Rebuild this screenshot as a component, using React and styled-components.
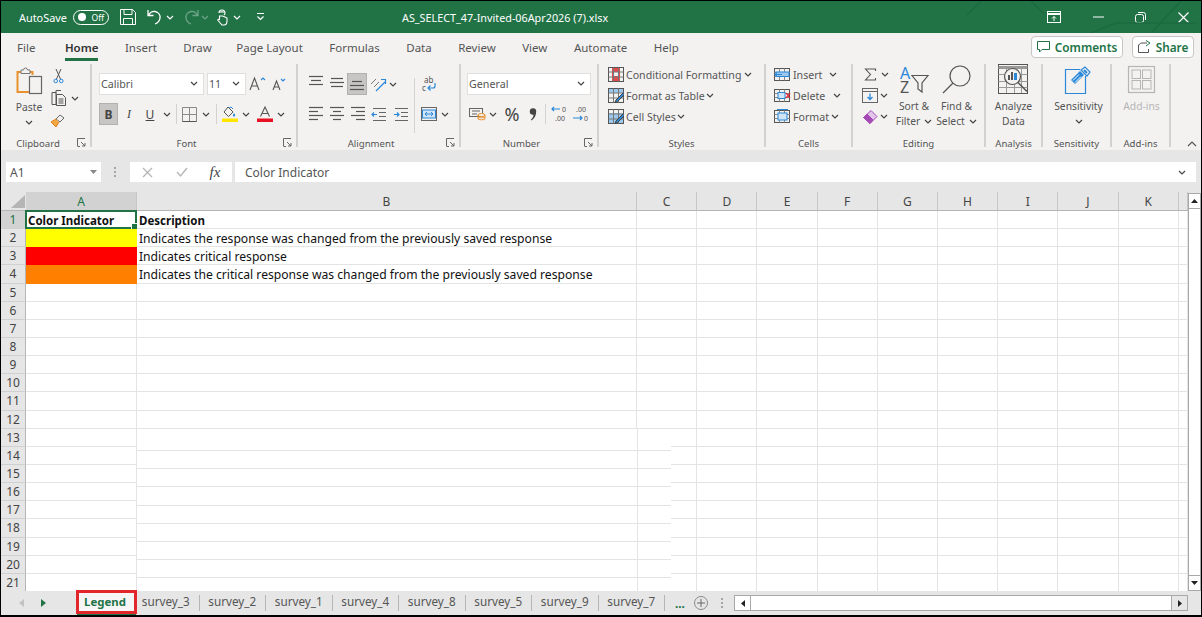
import React from 'react'
import styled, { createGlobalStyle } from 'styled-components'

const GREEN = '#217346'
const INK = '#444'
const BLUE = '#2b88d8'

const Global = createGlobalStyle`
	html, body { margin: 0; padding: 0; background: #fff; }
	* { box-sizing: border-box; }
	body { font-family: "Noto Sans", "Open Sans", sans-serif; color: #444; overflow: hidden; }
`

const Frame = styled.div`
	width: 1202px;
	height: 617px;
	border: solid #000;
	border-width: 1px 1px 2px 1px;
	display: flex;
	flex-direction: column;
	overflow: hidden;
	background: #f3f2f1;
`

const TitleBar = styled.div`
	height: 32px;
	flex: none;
	background: ${GREEN};
	color: #fff;
	display: flex;
	align-items: center;
	font-size: 10.9px;
	position: relative;
`
const AutoSave = styled.span`
	margin-left: 18px;
	width: 54px;
`
const Toggle = styled.span`
	width: 36px;
	height: 15px;
	border: 1px solid #fff;
	border-radius: 8px;
	display: flex;
	align-items: center;
	padding: 0 4px;
	gap: 6px;
	font-size: 8.5px;
	&::before {
		content: '';
		width: 8px;
		height: 8px;
		border-radius: 50%;
		background: #fff;
	}
`
const QuickTool = styled.span`
	display: flex;
	align-items: center;
	justify-content: center;
	flex: none;
	width: ${p => p.$w}px;
	margin-left: ${p => p.$ml || 0}px;
	margin-right: ${p => p.$mr || 0}px;
	opacity: ${p => (p.$dim ? 0.35 : 1)};
`
const FileName = styled.span`
	margin-left: 137px;
	font-size: 10.8px;
	white-space: nowrap;
`
const WindowControls = styled.div`
	margin-left: auto;
	display: flex;
	align-items: center;
`
const Art = styled.svg`
	position: absolute;
	right: 0;
	top: 0;
	pointer-events: none;
`

const TabRow = styled.div`
	height: 29px;
	flex: none;
	display: flex;
	align-items: center;
	padding-left: 16px;
	gap: 26.5px;
	font-size: 11.5px;
	color: #555;
`
const RibbonTab = styled.span`
	position: relative;
	white-space: nowrap;
	margin-right: ${p => (p.$tight ? -2 : 0)}px;
	${p =>
		p.$active &&
		`
		color: #333;
		font-weight: 600;
		margin-left: 3px;
		&::after {
			content: '';
			position: absolute;
			left: 0;
			right: 0;
			bottom: -6px;
			height: 3px;
			background: ${GREEN};
		}
	`}
`
const ShareActions = styled.div`
	margin-left: auto;
	margin-right: 7px;
	margin-top: -2px;
	display: flex;
	gap: 9px;
`
const ActionButton = styled.button`
	height: 22px;
	width: ${p => p.$w}px;
	background: #fff;
	border: 1px solid #c8c6c4;
	border-radius: 4px;
	color: ${GREEN};
	font: 600 11.8px "Noto Sans", sans-serif;
	display: flex;
	align-items: center;
	justify-content: center;
	gap: 5px;
	padding: 0;
`

const Ribbon = styled.div`
	height: 88px;
	flex: none;
	display: flex;
	background: #f3f2f1;
`
const Group = styled.div`
	width: ${p => p.$w}px;
	flex: none;
	display: flex;
	flex-direction: column;
	position: relative;
`
const GroupBody = styled.div`
	height: 75px;
	flex: none;
	display: flex;
	padding-top: ${p => p.$top || 2}px;
`
const GroupLabel = styled.div`
	height: 14px;
	line-height: 14px;
	font-size: 9.6px;
	text-align: center;
	color: #555;
	padding-right: ${p => p.$inset || 0}px;
`
const Launcher = styled.svg`
	position: absolute;
	right: 4px;
	bottom: 3px;
`
const Sep = styled.div`
	width: 2px;
	flex: none;
	margin: 2px 0 3px;
	background: #d4d2d0;
`
const InlineSep = styled.span`
	width: 1px;
	height: ${p => p.$h || 20}px;
	flex: none;
	margin-left: ${p => p.$ml || 0}px;
	background: #d4d2d0;
	align-self: center;
`
const ToolRow = styled.div`
	height: ${p => p.$h || 22}px;
	display: flex;
	align-items: center;
	margin-bottom: ${p => p.$after || 0}px;
`
const Stack = styled.div`
	width: ${p => p.$w}px;
	flex: none;
	margin-left: ${p => p.$ml || 0}px;
`
const Tool = styled.span`
	width: ${p => p.$w}px;
	height: 22px;
	flex: none;
	margin-left: ${p => p.$ml || 0}px;
	display: flex;
	align-items: center;
	justify-content: center;
	background: ${p => (p.$on ? '#c8c6c4' : 'transparent')};
	border: ${p => (p.$on ? '1px solid #b3b1af' : 'none')};
	font: ${p => p.$font || 'inherit'};
	color: #444;
`
const Combo = styled.div`
	width: ${p => p.$w}px;
	height: 22px;
	flex: none;
	margin-left: ${p => p.$ml || 0}px;
	background: #fff;
	border: 1px solid #e1dfdd;
	display: flex;
	align-items: center;
	justify-content: space-between;
	padding: 0 5px 1px 1px;
	font-size: 10.7px;
	color: #555;
`
const ListRow = styled.div`
	height: 21px;
	display: flex;
	align-items: center;
	white-space: nowrap;
	font-size: 10.6px;
	color: #555;
	svg { flex: none; }
`
const ListText = styled.span`
	margin-left: 2px;
	margin-right: ${p => p.$gap || 5}px;
`
const BigTool = styled.div`
	width: ${p => p.$w}px;
	flex: none;
	margin-left: ${p => p.$ml || 0}px;
	display: flex;
	flex-direction: column;
	align-items: center;
	font-size: 10.3px;
	line-height: 15px;
	color: ${p => (p.$muted ? '#b5b5b5' : '#555')};
	text-align: center;
	white-space: nowrap;
`
const BigIcon = styled.div`
	height: 31px;
	margin-bottom: 4px;
	display: flex;
	align-items: center;
	justify-content: center;
`
const BigLine = styled.div`
	height: 15px;
	display: flex;
	align-items: center;
	justify-content: center;
	gap: 4px;
`
const RibbonEnd = styled.div`
	flex: 1;
	display: flex;
	align-items: flex-end;
	justify-content: flex-end;
	padding: 0 4px 3px 0;
`

const RibbonGap = styled.div`
	height: 5px;
	flex: none;
	background: #e6e6e6;
`
const FormulaBar = styled.div`
	height: 37px;
	flex: none;
	background: #e6e6e6;
	display: flex;
	padding: 7px 5px 0 5px;
	align-items: flex-start;
`
const FieldBox = styled.div`
	height: 20px;
	background: #fff;
	display: flex;
	align-items: center;
	font-size: 12px;
	color: #555;
	flex: ${p => (p.$grow ? 1 : 'none')};
	width: ${p => (p.$w ? p.$w + 'px' : 'auto')};
	margin-left: ${p => p.$ml || 0}px;
	padding: 0 ${p => p.$px || 0}px;
	justify-content: ${p => p.$justify || 'flex-start'};
`
const Dots = styled.span`
	width: 2px;
	height: 10px;
	margin-left: ${p => p.$ml}px;
	align-self: ${p => (p.$bar ? 'center' : 'auto')};
	margin-top: ${p => (p.$bar ? 0 : 5)}px;
	flex: none;
	background: repeating-linear-gradient(to bottom, #a5a5a5 0 2px, transparent 2px 4px);
`

const SheetArea = styled.div`
	height: 399px;
	flex: none;
	display: flex;
	background: #fff;
	overflow: hidden;
`
const Grid = styled.div`
	position: relative;
	width: 1187px;
	flex: none;
	display: grid;
	grid-template-columns: 25px 111px 500px repeat(9, 60.2px) 9px;
	grid-template-rows: 19px repeat(21, 18.15px);
	font-size: 12.15px;
	color: #111;
`
const Corner = styled.div`
	background: #e6e6e6;
	border-bottom: 1px solid #b5b5b5;
	display: flex;
	align-items: flex-end;
	justify-content: flex-end;
	padding: 0 1px 2px 0;
`
const ColHead = styled.div`
	background: ${p => (p.$on ? '#d2d2d2' : '#e6e6e6')};
	border-bottom: 1px solid ${p => (p.$on ? GREEN : '#b5b5b5')};
	border-right: 1px solid #c6c6c6;
	color: ${p => (p.$on ? GREEN : '#444')};
	display: flex;
	align-items: center;
	justify-content: center;
	font-size: 12px;
`
const RowHead = styled.div`
	background: ${p => (p.$on ? '#d2d2d2' : '#e6e6e6')};
	border-bottom: 1px solid #d0d0d0;
	border-right: 1px solid ${p => (p.$on ? GREEN : '#b5b5b5')};
	color: ${p => (p.$on ? GREEN : '#444')};
	display: flex;
	align-items: center;
	justify-content: center;
	font-size: 12px;
`
const Cell = styled.div`
	background: ${p => p.$fill || '#fff'};
	border-right: 1px solid ${p => (p.$fill ? p.$fill : '#e4e4e4')};
	border-bottom: 1px solid ${p => (p.$fill ? p.$fill : '#e4e4e4')};
	padding-left: 2px;
	line-height: 19px;
	white-space: nowrap;
	font-size: ${p => (p.$bold ? '11.5px' : 'inherit')};
	font-weight: ${p => (p.$bold ? 700 : 400)};
	position: relative;
`
const Selection = styled.div`
	position: absolute;
	left: -1px;
	top: -1px;
	right: -1px;
	bottom: -1px;
	border: 2px solid ${GREEN};
	pointer-events: none;
	&::after {
		content: '';
		position: absolute;
		right: -3px;
		bottom: -3px;
		width: 5px;
		height: 5px;
		background: ${GREEN};
		border: 1px solid #fff;
	}
`
const ShiftedPatch = styled.div`
	position: absolute;
	left: 136px;
	top: 237px;
	width: 534px;
	height: 162px;
	background-color: #fff;
	background-image:
		linear-gradient(#e4e4e4, #e4e4e4),
		repeating-linear-gradient(to bottom, transparent 0, transparent 17.15px, #e4e4e4 17.15px, #e4e4e4 18.15px);
	background-size: 1px 100%, 100% 100%;
	background-position: 500px 0, 0 3.5px;
	background-repeat: no-repeat, no-repeat;
`
const VScroll = styled.div`
	flex: 1;
	display: flex;
	flex-direction: column;
	background: #e6e6e6;
	padding-top: 1px;
`
const ScrollButton = styled.div`
	height: 16px;
	flex: none;
	background: #fff;
	border: 1px solid #a8a8a8;
	display: flex;
	align-items: center;
	justify-content: center;
`
const VTrack = styled.div`
	flex: 1;
	background: #fff;
	border: solid #a8a8a8;
	border-width: 0 1px;
`

const SheetBar = styled.div`
	height: 24px;
	flex: none;
	background: #e6e6e6;
	display: flex;
	align-items: center;
	font-size: 11.7px;
	color: #555;
`
const SheetNav = styled.div`
	width: 75px;
	flex: none;
	display: flex;
	padding-left: 18px;
	gap: 17px;
`
const ActiveSheet = styled.div`
	width: 61px;
	height: 24px;
	flex: none;
	margin-bottom: 3px;
	padding-right: 3px;
	border: 3px solid #e2272c;
	background: #f6f6f6;
	color: ${GREEN};
	font-size: 11.4px;
	font-weight: 700;
	display: flex;
	align-items: center;
	justify-content: center;
	position: relative;
	z-index: 1;
	&::after {
		content: '';
		position: absolute;
		left: -2px;
		right: -2px;
		bottom: -4px;
		height: 1px;
		background: ${GREEN};
	}
`
const SheetTabs = styled.div`
	display: flex;
	margin-left: -4px;
`
const SheetTab = styled.div`
	width: 66.5px;
	height: 16px;
	line-height: 13px;
	text-align: center;
	border-right: 1px solid #b5b5b5;
	white-space: nowrap;
`
const MoreTabs = styled.span`
	margin-left: 10px;
	width: 11px;
	color: ${GREEN};
	font-weight: 700;
	line-height: 12px;
`
const AddSheet = styled.span`
	width: 14px;
	height: 14px;
	margin-left: 8px;
	border: 1px solid #8a8a8a;
	border-radius: 50%;
	display: flex;
	align-items: center;
	justify-content: center;
	flex: none;
`
const HScroll = styled.div`
	margin-left: 11px;
	width: 454px;
	height: 16px;
	flex: none;
	display: flex;
	align-items: stretch;
	border: 1px solid #a8a8a8;
	background: #e6e6e6;
`
const HButton = styled.div`
	width: ${p => p.$w}px;
	flex: none;
	background: ${p => (p.$plain ? 'transparent' : '#fff')};
	display: flex;
	align-items: center;
	justify-content: center;
`
const HThumb = styled.div`
	flex: 1;
	background: #fff;
	border: solid #a8a8a8;
	border-width: 0 1px;
`

const Chevron = ({ color = INK }) => (
	<svg width="8" height="5" viewBox="0 0 8 5" fill="none" stroke={color} strokeWidth="1.2">
		<path d="M1 1l3 3 3-3" />
	</svg>
)
const Chev = ({ w = 14, ml }) => (
	<Tool $w={w} $ml={ml}>
		<Chevron />
	</Tool>
)
const Ico = ({ w, h, children, ...rest }) => (
	<svg width={w} height={h} viewBox={`0 0 ${w} ${h}`} fill="none" stroke={INK} strokeWidth="1" overflow="visible" {...rest}>
		{children}
	</svg>
)
const LaunchIcon = () => (
	<Launcher width="9" height="9" viewBox="0 0 9 9" fill="none" stroke="#666">
		<path d="M.5 8V.5H8M4 4l4 4M8 5v3H5" />
		<path d="M.5 8.5H3" />
	</Launcher>
)
const LinesIcon = ({ widths, top = 3, gap = 4 }) => (
	<Ico w={14} h={22} stroke="#555" strokeWidth="1.2">
		{widths.map((x, i) => (
			<path key={i} d={`M${x[0]} ${i * gap + top + 0.5}H${x[1]}`} />
		))}
	</Ico>
)

const PasteIcon = () => (
	<Ico w={27} h={30}>
		<path d="M5 6H1.500v20H15" stroke="#e8912d" strokeWidth="2" />
		<path d="M13 6h3.500v3" stroke="#e8912d" strokeWidth="2" />
		<path d="M5 7V4h2.500a2 2 0 0 1 4 0H14v3.500H5z" fill="#f3f2f1" stroke="#777" />
		<rect x="13.500" y="10.500" width="12" height="17" fill="#f3f2f1" stroke="#666" strokeWidth="1.2" />
	</Ico>
)
const CutIcon = () => (
	<Ico w={11} h={16} stroke="#555">
		<path d="M3 1l4.500 10M8 1L3.500 11" />
		<circle cx="2.700" cy="13" r="1.800" stroke={BLUE} />
		<circle cx="8.300" cy="13" r="1.800" stroke={BLUE} />
	</Ico>
)
const CopyIcon = () => (
	<Ico w={16} h={16} stroke="#555">
		<path d="M5 3.500V.5h5M1 2.500h4v12H1z" />
		<path d="M5.500 4.500h6l3 3v8h-9z" fill="#f3f2f1" />
		<path d="M7.500 9h5M7.500 11h5M7.500 13h5" />
	</Ico>
)
const PainterIcon = () => (
	<Ico w={16} h={15}>
		<path d="M10 2l4 3-4 4-4-3z" stroke="#666" />
		<path d="M6 6L1 9l5 5 3-5" fill="#f5a742" stroke="#dd7d1c" />
	</Ico>
)
const GrowIcon = ({ up }) => (
	<Ico w={up ? 17 : 14} h={16} stroke="#555">
		<path d={up ? 'M1 14L5.500 2 10 14M2.600 10h6' : 'M1 14L4.500 5 8 14M2.200 11h4.600'} strokeWidth="1.100" />
		<path d={up ? 'M12 4l2-2 2 2' : 'M9 3l2 2 2-2'} stroke={BLUE} strokeWidth="1.200" />
	</Ico>
)
const BorderIcon = () => (
	<Ico w={15} h={15} stroke="#8a8a8a">
		<path d="M.5.5h14v14H.5zM7.500.5v14M.5 7.500h14" />
		<path d="M.5 14.500h14" stroke="#555" />
	</Ico>
)
const FillIcon = () => (
	<Ico w={16} h={16}>
		<path d="M6 1l5 5-4.500 4.500L2 6z" stroke="#555" />
		<path d="M12 7c1.500 2 1.500 3.500 0 3.500S10.500 9 12 7z" fill={BLUE} stroke="none" />
		<path d="M7 2l2-1 2 2" stroke={BLUE} />
		<rect x="0" y="12.500" width="16" height="3.500" fill="#ffe600" stroke="none" />
	</Ico>
)
const FontColorIcon = () => (
	<Ico w={16} h={16} stroke="#555">
		<path d="M3.500 10.500L8 1l4.500 9.500M5 7.500h6" strokeWidth="1.100" />
		<rect x="0" y="12.500" width="16" height="3.500" fill="#e81123" stroke="none" />
	</Ico>
)
const OrientIcon = () => (
	<Ico w={17} h={17}>
		<path d="M1 8l5-5M4 11l5-5" stroke="#777" />
		<path d="M6 15l9-9" stroke={BLUE} strokeWidth="1.300" />
		<path d="M11 3.500h4.500V8" stroke={BLUE} strokeWidth="1.200" />
	</Ico>
)
const WrapIcon = () => (
	<Ico w={16} h={17}>
		<text x="3" y="7" fontSize="8" fill="#555" stroke="none" fontFamily="Noto Sans">ab</text>
		<text x="1" y="15" fontSize="8" fill="#555" stroke="none" fontFamily="Noto Sans">c</text>
		<path d="M14 7v3a2 2 0 0 1-2 2H7M9.500 9.500L7 12l2.500 2.500" stroke={BLUE} strokeWidth="1.200" />
	</Ico>
)
const MergeIcon = () => (
	<Ico w={16} h={14}>
		<rect x=".5" y=".5" width="15" height="13" stroke="#666" />
		<rect x="1.500" y="3" width="13" height="8" fill="#d0e6f8" stroke={BLUE} />
		<path d="M4 7h8M4 7l2-2M4 7l2 2M12 7l-2-2M12 7l-2 2" stroke={BLUE} />
	</Ico>
)
const IndentIcon = ({ inc }) => (
	<Ico w={14} h={13}>
		<path d="M1 .5h13M7 4.500h7M7 8.500h7M1 12.500h13" stroke="#666" />
		<path d={inc ? 'M0 6.500h5M3 4.500l2 2-2 2' : 'M5 6.500H0M2 4.500l-2 2 2 2'} stroke={BLUE} strokeWidth="1.200" />
	</Ico>
)
const AccountingIcon = () => (
	<Ico w={17} h={14}>
		<rect x=".5" y="1.500" width="13" height="8" stroke="#666" />
		<path d="M3 4h8M3 7h5" stroke="#666" />
		<ellipse cx="12.500" cy="8" rx="3.500" ry="1.500" fill="#f3f2f1" stroke="#e8912d" />
		<path d="M9 8v4c0 1 7 1 7 0V8M9 10c0 1 7 1 7 0" stroke="#e8912d" />
	</Ico>
)
const CommaIcon = () => (
	<Ico w={8} h={13} stroke="none">
		<circle cx="4" cy="3.500" r="3.200" fill="#444" />
		<path d="M7 3.500c.4 4-1.500 7-4.500 9l-.6-.8c2-1.800 2.800-3.800 2.600-6z" fill="#444" />
	</Ico>
)
const DecimalIcon = ({ inc }) => (
	<Ico w={19} h={18} stroke="none">
		<text x={inc ? 11 : 4} y="7" fontSize="7" fill="#555" fontFamily="Noto Sans">{inc ? '0' : '.00'}</text>
		<text x={inc ? 4 : 12} y="16" fontSize="7" fill="#555" fontFamily="Noto Sans">{inc ? '.00' : '0'}</text>
		<path d={inc ? 'M9 4H1M3 2L1 4l2 2' : 'M1 13h9M8 11l2 2-2 2'} stroke={BLUE} strokeWidth="1.200" />
	</Ico>
)
const TableIcon = ({ kind }) => (
	<Ico w={16} h={15}>
		{kind === 'cond' && <rect x="4" y="1" width="8" height="13" fill="#e8484a" stroke="none" />}
		{kind === 'cond' && <rect x="5" y="5" width="6" height="4" fill="#f3f2f1" stroke="none" />}
		{kind === 'table' && <rect x="1" y="1" width="14" height="4" fill="#9cc8ee" stroke="none" />}
		{kind === 'style' && <rect x="1" y="4" width="14" height="10" fill="#9cc8ee" stroke="none" />}
		<rect x=".5" y=".5" width="15" height="14" stroke="#555" />
		<path d="M5.500.5v14M10.500.5v14M.5 5h15M.5 10h15" stroke="#777" />
		{kind !== 'cond' && <path d="M15 5L8 12l-1 2.500 2.500-1 6.500-6.500" fill={BLUE} stroke="#444" />}
	</Ico>
)
const CellIcon = ({ kind }) => (
	<Ico w={17} h={15}>
		<rect x=".5" y="1.500" width="15" height="12" stroke="#555" />
		<path d="M5.500 1.500v12M10.500 1.500v12M.5 5.500h15M.5 9.500h15" stroke="#888" />
		{kind === 'insert' && <rect x="2" y="5" width="13" height="4.500" fill="#9cc8ee" stroke={BLUE} />}
		{kind === 'insert' && <path d="M8 7.500H1M3 5.500l-2 2 2 2" stroke={BLUE} />}
		{kind === 'delete' && <rect x="4" y="4.500" width="7" height="6" fill="#cfe4f7" stroke={BLUE} />}
		{kind === 'delete' && <path d="M12 5l4 5M16 5l-4 5" stroke="#e81123" strokeWidth="1.200" />}
		{kind === 'format' && <rect x="4" y="4" width="9" height="7" fill="#cfe4f7" stroke={BLUE} />}
		{kind === 'format' && <path d="M3 .5h11" stroke={BLUE} />}
	</Ico>
)
const SigmaIcon = () => (
	<Ico w={13} h={13} stroke="#555">
		<path d="M11.500 3V1H1.500l5 5.500-5 5.500h10v-2" strokeWidth="1.100" />
	</Ico>
)
const FillDownIcon = () => (
	<Ico w={16} h={15} stroke="#666">
		<rect x=".5" y=".5" width="15" height="14" />
		<path d="M.5 3.500h15" />
		<path d="M8 5.500v6M5.500 9L8 11.500 10.500 9" stroke={BLUE} strokeWidth="1.300" />
	</Ico>
)
const EraserIcon = () => (
	<Ico w={16} h={14}>
		<path d="M9 .5l6 6-7 7-6.500-6z" fill="#e3c4ea" stroke="#a54ab5" />
		<path d="M5 4l6 6-3 3.500-6.500-6z" fill="#a54ab5" stroke="#a54ab5" />
	</Ico>
)
const SortFilterIcon = () => (
	<Ico w={29} h={28}>
		<text x="0" y="13" fontSize="16" fill={BLUE} stroke="none" fontFamily="Noto Sans">A</text>
		<text x="0" y="27" fontSize="16" fill="#555" stroke="none" fontFamily="Noto Sans">Z</text>
		<path d="M12 9.500h16l-6 7.500v9l-4-3v-6z" stroke="#555" strokeWidth="1.200" />
	</Ico>
)
const FindIcon = () => (
	<Ico w={29} h={29} stroke="#555">
		<circle cx="18" cy="11" r="10" strokeWidth="1.200" />
		<path d="M11 18L1 28" strokeWidth="1.300" />
	</Ico>
)
const AnalyzeIcon = () => (
	<Ico w={31} h={31} stroke="#555">
		<rect x=".5" y=".5" width="29" height="29" />
		<path d="M.5 3.500h29" strokeWidth="3" stroke="#999" />
		<path d="M.5 10.500h29M.5 17.500h29M.5 23.500h29M8.500 4v25M16.500 4v25M23.500 4v25" stroke="#999" />
		<circle cx="14.500" cy="12.500" r="8" fill="#f3f2f1" strokeWidth="1.200" />
		<path d="M20 18.500l9 9" strokeWidth="1.600" />
		<rect x="10" y="11" width="2" height="5" fill="#555" stroke="none" />
		<rect x="13" y="8" width="2" height="8" fill="#555" stroke="none" />
		<rect x="16" y="9" width="3" height="7" fill={BLUE} stroke="none" />
	</Ico>
)
const SensitivityIcon = () => (
	<Ico w={27} h={28}>
		<path d="M15 3.500H.5v24h20V10" stroke={BLUE} strokeWidth="1.200" fill="#f3f2f1" />
		<path d="M6 14l9-9 4 4-9 9z" fill={BLUE} stroke="none" />
		<path d="M8 14.500l6-6M10 16.500l6-6" stroke="#fff" />
		<path d="M16 4l4-3 5 5-3 4z" fill="#f3f2f1" stroke={BLUE} strokeWidth="1.200" />
		<path d="M19 4l3 3" stroke={BLUE} strokeWidth="2" />
	</Ico>
)
const AddInsIcon = () => (
	<Ico w={27} h={27} stroke="#b5b5b5">
		<rect x=".5" y=".5" width="26" height="26" strokeWidth="1.200" />
		<rect x="4" y="4" width="8.500" height="8.500" />
		<rect x="14.500" y="4" width="8.500" height="8.500" />
		<rect x="4" y="14.500" width="8.500" height="8.500" />
		<rect x="14.500" y="14.500" width="8.500" height="8.500" />
	</Ico>
)

const sheets = ['survey_3', 'survey_2', 'survey_1', 'survey_4', 'survey_8', 'survey_5', 'survey_9', 'survey_7']
const ribbonTabs = ['File', 'Home', 'Insert', 'Draw', 'Page Layout', 'Formulas', 'Data', 'Review', 'View', 'Automate', 'Help']
const columns = ['A', 'B', 'C', 'D', 'E', 'F', 'G', 'H', 'I', 'J', 'K', '']
const rowsData = {
	1: { a: 'Color Indicator', b: 'Description', bold: true },
	2: { fill: '#ffff00', b: 'Indicates the response was changed from the previously saved response' },
	3: { fill: '#ff0000', b: 'Indicates critical response' },
	4: { fill: '#ff8000', b: 'Indicates the critical response was changed from the previously saved response' }
}
const rowNumbers = Array.from({ length: 21 }, (_, i) => i + 1)

function TitleSection() {
	return (
		<TitleBar>
			<Art width="300" height="32" viewBox="0 0 300 32" fill="none" stroke="#1c6a3f" strokeWidth="1.500">
				<path d="M80 0l-14 14M130 0l14 14M190 32l25-10h80M250 32l30-32" />
			</Art>
			<AutoSave>AutoSave</AutoSave>
			<Toggle>Off</Toggle>
			<QuickTool $w={16} $ml={11}>
				<Ico w={16} h={16} stroke="#fff">
					<path d="M.5.5h12l3 3v12H.500z" />
					<path d="M4 .5v5h8v-5M3.500 15.500V9.500h9v6" />
				</Ico>
			</QuickTool>
			<QuickTool $w={16} $ml={10}>
				<Ico w={15} h={16} stroke="#fff" strokeWidth="1.300">
					<path d="M1 1v5.500h5.500M1.500 6c2-3 4-4 6.500-3.500 3.500.7 5.500 3.500 5 6.500-.3 2.500-2.500 5-5 6" />
				</Ico>
			</QuickTool>
			<QuickTool $w={9} $ml={3}><Chevron color="#fff" /></QuickTool>
			<QuickTool $w={16} $ml={9} $dim>
				<Ico w={15} h={16} stroke="#fff" strokeWidth="1.300">
					<path d="M14 1v5.500H8.500M13.500 6c-2-3-4-4-6.500-3.500-3.500.7-5.500 3.500-5 6.500.3 2.500 2.500 5 5 6" />
				</Ico>
			</QuickTool>
			<QuickTool $w={9} $ml={1} $dim><Chevron color="#fff" /></QuickTool>
			<QuickTool $w={14} $ml={6}>
				<Ico w={14} h={17} stroke="#fff" strokeWidth="1.100">
					<path d="M4 4a3 3 0 1 1 6 0c0 1-.5 1.500-1 2M5 3.500c0-1 4-1 4 0M4.500 7h3l2.500 1 2 1v3c0 2-1 4-3 4H7L3 11.500c-.6-1 .5-1.500 1.500-1V7z" />
				</Ico>
			</QuickTool>
			<QuickTool $w={9} $ml={3}><Chevron color="#fff" /></QuickTool>
			<QuickTool $w={9} $ml={15}>
				<Ico w={9} h={8} stroke="#fff">
					<path d="M1 .5h7M1.500 3.500l3 3 3-3" strokeWidth="1.200" />
				</Ico>
			</QuickTool>
			<FileName>AS_SELECT_47-Invited-06Apr2026 (7).xlsx</FileName>
			<WindowControls>
				<QuickTool $w={16}>
					<Ico w={14} h={12} stroke="#fff">
						<rect x=".5" y=".5" width="13" height="11" />
						<path d="M.5 3h13" strokeWidth="2" />
						<path d="M7 10V5.500M5 7.500l2-2 2 2" />
					</Ico>
				</QuickTool>
				<QuickTool $w={12} $ml={30}>
					<Ico w={11} h={2} stroke="#fff"><path d="M0 1h11" /></Ico>
				</QuickTool>
				<QuickTool $w={12} $ml={30}>
					<Ico w={11} h={11} stroke="#fff">
						<rect x=".5" y="2.500" width="8" height="8" rx="2" />
						<path d="M3 .5h5.500a2 2 0 0 1 2 2V8" />
					</Ico>
				</QuickTool>
				<QuickTool $w={11} $ml={32} $mr={12}>
					<Ico w={11} h={11} stroke="#fff" strokeWidth="1.200"><path d="M.5.5l10 10M10.500.5l-10 10" /></Ico>
				</QuickTool>
			</WindowControls>
		</TitleBar>
	)
}

function TabsSection() {
	return (
		<TabRow>
			{ribbonTabs.map(t => (
				<RibbonTab key={t} $active={t === 'Home'} $tight={t === 'Draw'}>{t}</RibbonTab>
			))}
			<ShareActions>
				<ActionButton $w={92}>
					<Ico w={13} h={12} stroke={GREEN}><path d="M.5.5h12v8H5L2.500 11V8.500h-2z" /></Ico>
					Comments
				</ActionButton>
				<ActionButton $w={62}>
					<Ico w={13} h={13} stroke="#555">
						<path d="M9 3H4C2 3 .5 4.500.5 6.500M.5 5v7.500h10V9" />
						<path d="M8 .5L12 3 8 6" stroke={GREEN} />
					</Ico>
					Share
				</ActionButton>
			</ShareActions>
		</TabRow>
	)
}

function RibbonSection() {
	return (
		<Ribbon>
			<Group $w={89}>
				<GroupBody $top={3}>
					<BigTool $w={30} $ml={13}>
						<BigIcon><PasteIcon /></BigIcon>
						<BigLine>Paste</BigLine>
						<BigLine><Chevron /></BigLine>
					</BigTool>
					<Stack $w={38} $ml={5}>
						<ToolRow><Tool $w={18}><CutIcon /></Tool></ToolRow>
						<ToolRow><Tool $w={20}><CopyIcon /></Tool><Chev w={12} /></ToolRow>
						<ToolRow><Tool $w={18}><PainterIcon /></Tool></ToolRow>
					</Stack>
				</GroupBody>
				<GroupLabel $inset={15}>Clipboard</GroupLabel>
				<LaunchIcon />
			</Group>
			<Sep />
			<Group $w={204}>
				<GroupBody $top={11}>
					<Stack $w={204}>
						<ToolRow $after={8}>
							<Combo $w={105} $ml={7}>Calibri<Chevron /></Combo>
							<Combo $w={39} $ml={3}>11<Chevron /></Combo>
							<Tool $w={22}><GrowIcon up /></Tool>
							<Tool $w={22}><GrowIcon /></Tool>
						</ToolRow>
						<ToolRow>
							<Tool $w={19} $ml={7} $on $font="700 12px 'Noto Sans'">B</Tool>
							<Tool $w={22} $font="italic 12px 'Liberation Serif'">I</Tool>
							<Tool $w={20} $font="12px 'Noto Sans'"><u>U</u></Tool>
							<Chev />
							<InlineSep $ml={2} />
							<Tool $w={20} $ml={2}><BorderIcon /></Tool>
							<Chev />
							<InlineSep $ml={3} />
							<Tool $w={18} $ml={4}><FillIcon /></Tool>
							<Chev />
							<Tool $w={18} $ml={3}><FontColorIcon /></Tool>
							<Chev />
						</ToolRow>
					</Stack>
				</GroupBody>
				<GroupLabel $inset={15}>Font</GroupLabel>
				<LaunchIcon />
			</Group>
			<Sep />
			<Group $w={161}>
				<GroupBody $top={11}>
					<Stack $w={116}>
						<ToolRow $after={8}>
							<Tool $w={21} $ml={7}><LinesIcon widths={[[0, 14], [2, 12], [0, 14]]} top={3} /></Tool>
							<Tool $w={21}><LinesIcon widths={[[1, 13], [0, 14], [1, 13]]} top={5} /></Tool>
							<Tool $w={20} $on><LinesIcon widths={[[2, 12], [0, 14], [0, 14]]} top={8} /></Tool>
							<Tool $w={18} $ml={2}><OrientIcon /></Tool>
							<Chev w={12} />
						</ToolRow>
						<ToolRow>
							<Tool $w={21} $ml={7}><LinesIcon widths={[[0, 14], [0, 9], [0, 14], [0, 9]]} top={4} /></Tool>
							<Tool $w={21}><LinesIcon widths={[[0, 14], [3, 11], [0, 14], [3, 11]]} top={4} /></Tool>
							<Tool $w={21}><LinesIcon widths={[[0, 14], [5, 14], [0, 14], [5, 14]]} top={4} /></Tool>
							<Tool $w={22}><IndentIcon /></Tool>
							<Tool $w={22}><IndentIcon inc /></Tool>
						</ToolRow>
					</Stack>
					<InlineSep $h={55} />
					<Stack $w={40}>
						<ToolRow $after={8}><Tool $w={18} $ml={5}><WrapIcon /></Tool></ToolRow>
						<ToolRow><Tool $w={18} $ml={5}><MergeIcon /></Tool><Chev /></ToolRow>
					</Stack>
				</GroupBody>
				<GroupLabel $inset={15}>Alignment</GroupLabel>
				<LaunchIcon />
			</Group>
			<Sep />
			<Group $w={136}>
				<GroupBody $top={11}>
					<Stack $w={136}>
						<ToolRow $after={8}>
							<Combo $w={124} $ml={6}>General<Chevron /></Combo>
						</ToolRow>
						<ToolRow>
							<Tool $w={18} $ml={7}><AccountingIcon /></Tool>
							<Chev />
							<Tool $w={24} $font="18px 'Noto Sans'">%</Tool>
							<Tool $w={18}><CommaIcon /></Tool>
							<InlineSep $ml={3} />
							<Tool $w={19} $ml={5}><DecimalIcon inc /></Tool>
							<Tool $w={19} $ml={2}><DecimalIcon /></Tool>
						</ToolRow>
					</Stack>
				</GroupBody>
				<GroupLabel $inset={15}>Number</GroupLabel>
				<LaunchIcon />
			</Group>
			<Sep />
			<Group $w={165}>
				<GroupBody>
					<Stack $w={165} $ml={9}>
						<ListRow><TableIcon kind="cond" /><ListText $gap={3}>Conditional Formatting</ListText><Chevron /></ListRow>
						<ListRow><TableIcon kind="table" /><ListText $gap={1}>Format as Table</ListText><Chevron /></ListRow>
						<ListRow><TableIcon kind="style" /><ListText $gap={1}>Cell Styles</ListText><Chevron /></ListRow>
					</Stack>
				</GroupBody>
				<GroupLabel>Styles</GroupLabel>
			</Group>
			<Sep />
			<Group $w={85}>
				<GroupBody>
					<Stack $w={85} $ml={8}>
						<ListRow><CellIcon kind="insert" /><ListText $gap={7}>Insert</ListText><Chevron /></ListRow>
						<ListRow><CellIcon kind="delete" /><ListText $gap={8}>Delete</ListText><Chevron /></ListRow>
						<ListRow><CellIcon kind="format" /><ListText $gap={2}>Format</ListText><Chevron /></ListRow>
					</Stack>
				</GroupBody>
				<GroupLabel>Cells</GroupLabel>
			</Group>
			<Sep />
			<Group $w={131}>
				<GroupBody>
					<Stack $w={39}>
						<ListRow><Tool $w={17} $ml={9}><SigmaIcon /></Tool><Chev w={12} $ml={1} /></ListRow>
						<ListRow><Tool $w={17} $ml={8}><FillDownIcon /></Tool><Chev w={12} /></ListRow>
						<ListRow><Tool $w={17} $ml={8}><EraserIcon /></Tool><Chev w={12} /></ListRow>
					</Stack>
					<BigTool $w={44}>
						<BigIcon><SortFilterIcon /></BigIcon>
						<BigLine>Sort &amp;</BigLine>
						<BigLine>Filter<Chevron /></BigLine>
					</BigTool>
					<BigTool $w={41}>
						<BigIcon><FindIcon /></BigIcon>
						<BigLine>Find &amp;</BigLine>
						<BigLine>Select<Chevron /></BigLine>
					</BigTool>
				</GroupBody>
				<GroupLabel>Editing</GroupLabel>
			</Group>
			<Sep />
			<Group $w={55}>
				<GroupBody>
					<BigTool $w={55}>
						<BigIcon><AnalyzeIcon /></BigIcon>
						<BigLine>Analyze</BigLine>
						<BigLine>Data</BigLine>
					</BigTool>
				</GroupBody>
				<GroupLabel>Analysis</GroupLabel>
			</Group>
			<Sep />
			<Group $w={67}>
				<GroupBody>
					<BigTool $w={67} $ml={2}>
						<BigIcon><SensitivityIcon /></BigIcon>
						<BigLine>Sensitivity</BigLine>
						<BigLine><Chevron /></BigLine>
					</BigTool>
				</GroupBody>
				<GroupLabel>Sensitivity</GroupLabel>
			</Group>
			<Sep />
			<Group $w={57}>
				<GroupBody>
					<BigTool $w={57} $ml={1} $muted>
						<BigIcon><AddInsIcon /></BigIcon>
						<BigLine>Add-ins</BigLine>
					</BigTool>
				</GroupBody>
				<GroupLabel>Add-ins</GroupLabel>
			</Group>
			<Sep />
			<RibbonEnd>
				<Ico w={10} h={6} stroke="#555" strokeWidth="1.200"><path d="M1 5l4-4 4 4" /></Ico>
			</RibbonEnd>
		</Ribbon>
	)
}

function FormulaSection() {
	return (
		<FormulaBar>
			<FieldBox $w={95} $px={4} $justify="space-between">
				A1
				<Ico w={7} h={4} fill="#888" stroke="none"><path d="M0 0h7L3.500 4z" /></Ico>
			</FieldBox>
			<Dots $ml={13} />
			<FieldBox $w={102} $ml={14}>
				<Tool $w={34}>
					<Ico w={11} h={11} stroke="#b5b5b5" strokeWidth="1.300"><path d="M1 1l9 9M10 1l-9 9" /></Ico>
				</Tool>
				<Tool $w={36}>
					<Ico w={12} h={10} stroke="#b5b5b5" strokeWidth="1.300"><path d="M1 5l3.500 4L11 1" /></Ico>
				</Tool>
				<Tool $w={30} $font="italic 15px 'Liberation Serif'">fx</Tool>
			</FieldBox>
			<FieldBox $grow $ml={3} $px={10} $justify="space-between">
				Color Indicator
				<Chevron />
			</FieldBox>
		</FormulaBar>
	)
}

function SheetSection() {
	return (
		<SheetArea>
			<Grid>
				<Corner>
					<Ico w={14} h={13} fill="#b5b5b5" stroke="none"><path d="M14 0v13H0z" /></Ico>
				</Corner>
				{columns.map((c, i) => (
					<ColHead key={i} $on={c === 'A'}>{c}</ColHead>
				))}
				{rowNumbers.map(n => {
					const row = rowsData[n] || {}
					return (
						<React.Fragment key={n}>
							<RowHead $on={n === 1}>{n}</RowHead>
							<Cell $fill={row.fill} $bold={row.bold}>
								{row.a}
								{n === 1 && <Selection />}
							</Cell>
							<Cell $bold={row.bold}>{row.b}</Cell>
							{columns.slice(2).map((c, i) => (
								<Cell key={i} />
							))}
						</React.Fragment>
					)
				})}
				<ShiftedPatch />
			</Grid>
			<VScroll>
				<ScrollButton>
					<Ico w={7} h={4} fill="#222" stroke="none"><path d="M0 4h7L3.500 0z" /></Ico>
				</ScrollButton>
				<VTrack />
				<ScrollButton>
					<Ico w={7} h={4} fill="#222" stroke="none"><path d="M0 0h7L3.500 4z" /></Ico>
				</ScrollButton>
			</VScroll>
		</SheetArea>
	)
}

function SheetBarSection() {
	return (
		<SheetBar>
			<SheetNav>
				<Ico w={5} h={8} fill="#c2c2c2" stroke="none"><path d="M5 0v8L0 4z" /></Ico>
				<Ico w={5} h={8} fill={GREEN} stroke="none"><path d="M0 0v8l5-4z" /></Ico>
			</SheetNav>
			<ActiveSheet>Legend</ActiveSheet>
			<SheetTabs>
				{sheets.map(s => (
					<SheetTab key={s}>{s}</SheetTab>
				))}
			</SheetTabs>
			<MoreTabs>...</MoreTabs>
			<AddSheet>
				<Ico w={8} h={8} stroke="#666"><path d="M4 0v8M0 4h8" /></Ico>
			</AddSheet>
			<Dots $ml={13} $bar />
			<HScroll>
				<HButton $w={15}>
					<Ico w={4} h={7} fill="#222" stroke="none"><path d="M4 0v7L0 3.500z" /></Ico>
				</HButton>
				<HThumb />
				<HButton $w={15} $plain>
					<Ico w={4} h={7} fill="#222" stroke="none"><path d="M0 0v7l4-3.500z" /></Ico>
				</HButton>
			</HScroll>
		</SheetBar>
	)
}

export default function App() {
	return (
		<>
			<Global />
			<Frame>
				<TitleSection />
				<TabsSection />
				<RibbonSection />
				<RibbonGap />
				<FormulaSection />
				<SheetSection />
				<SheetBarSection />
			</Frame>
		</>
	)
}
